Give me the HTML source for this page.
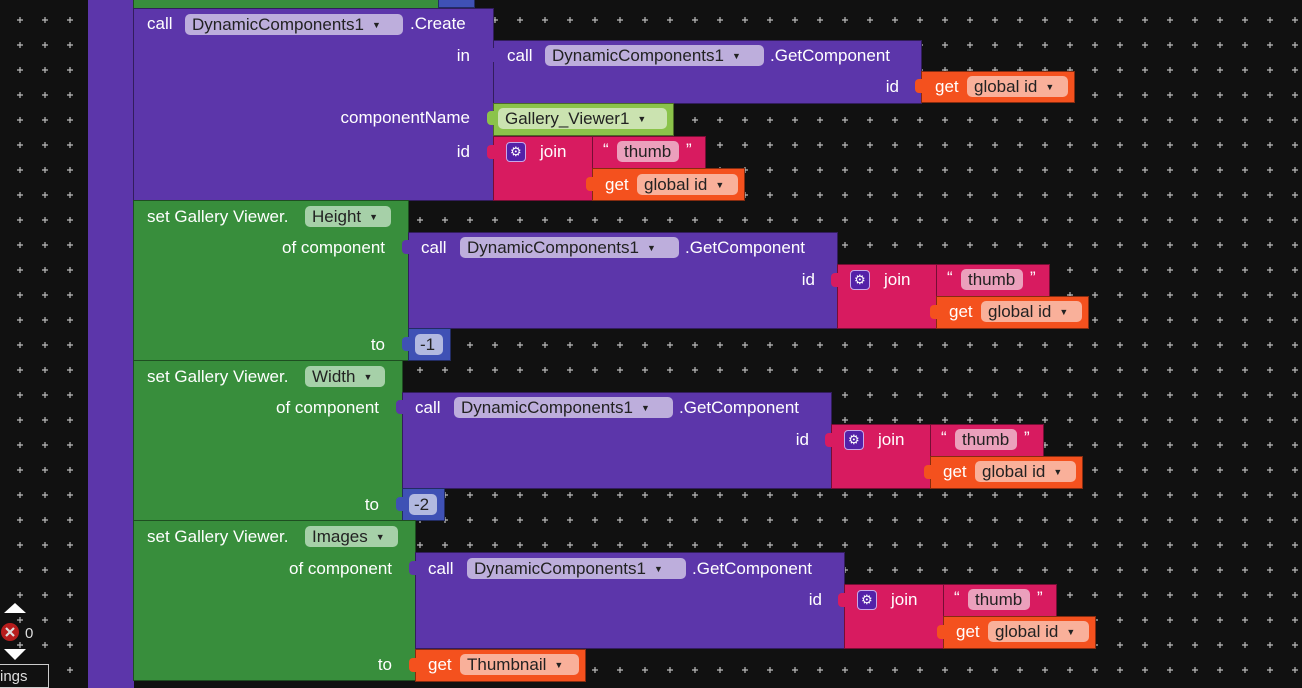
<!DOCTYPE html>
<html><head><meta charset="utf-8"><style>
body{margin:0;width:1302px;height:683px;overflow:hidden;background:#111;font-family:"Liberation Sans",Arial,sans-serif;font-size:17px;color:#fff;position:relative}
.b{position:absolute;box-sizing:border-box;border:1px solid rgba(0,0,0,.45)}
.t{position:absolute;white-space:nowrap;line-height:20px}
.r{position:absolute;white-space:nowrap;line-height:20px;width:200px;text-align:right}
.p{position:absolute;height:21px;line-height:21px;border-radius:5px;padding:0 7px;color:#222;white-space:nowrap;box-sizing:border-box}
.p i{font-style:normal;font-size:9px;margin-left:8px;vertical-align:2px}
.pu{background:#5c36aa}.gr{background:#388e3c}.mg{background:#d81b60}.or{background:#f4511e}.lg{background:#8bc34a}.bl{background:#3f51b5}
.ppu{background:#bdaedc}.pgr{background:#a6d0a8}.por{background:#f9b09a}.pmg{background:#eba0bc}.plg{background:#cbe3b0}.pbl{background:#b2b9e0}
.gear{position:absolute;width:20px;height:20px;border-radius:4px;background:#5321a8;border:1px solid #c9a8e8;box-sizing:border-box}
.tab{position:absolute;width:7px;height:14px;border-radius:4px 0 0 4px}
</style></head><body>
<svg width="1302" height="683" style="position:absolute;left:0;top:0">
<defs><pattern id="g" x="0" y="0" width="25" height="25" patternUnits="userSpaceOnUse">
<path d="M17 20h6M20 17v6" stroke="#bbb" stroke-width="1.2"/></pattern></defs>
<rect width="1302" height="683" fill="url(#g)"/>
</svg>
<div class="b pu" style="left:88px;top:-2px;width:46px;height:690px;border:none"></div>
<div class="b gr" style="left:133px;top:-5px;width:306px;height:14px"></div>
<div class="b bl" style="left:438px;top:-5px;width:37px;height:13px"></div>

<!-- Create -->
<div class="b pu" style="left:133px;top:8px;width:361px;height:193px"></div>
<div class="t" style="left:147px;top:14px">call</div>
<div class="p ppu" style="left:185px;top:14px;width:218px">DynamicComponents1<i>▼</i></div>
<div class="t" style="left:410px;top:14px">.Create</div>
<div class="r" style="left:270px;top:46px">in</div>
<div class="r" style="left:270px;top:108px">componentName</div>
<div class="r" style="left:270px;top:142px">id</div>

<div class="b pu" style="left:493px;top:40px;width:429px;height:64px"></div>
<div class="tab pu" style="left:487px;top:48px"></div>
<div class="t" style="left:507px;top:46px">call</div>
<div class="p ppu" style="left:545px;top:45px;width:219px">DynamicComponents1<i>▼</i></div>
<div class="t" style="left:770px;top:46px">.GetComponent</div>
<div class="r" style="left:699px;top:77px">id</div>
<div class="b or" style="left:921px;top:71px;width:154px;height:32px"></div>
<div class="tab or" style="left:915px;top:79px"></div>
<div class="t" style="left:935px;top:77px">get</div>
<div class="p por" style="left:967px;top:76px;width:101px">global id<i>▼</i></div>

<div class="b lg" style="left:493px;top:103px;width:181px;height:33px"></div>
<div class="tab lg" style="left:487px;top:111px"></div>
<div class="p plg" style="left:498px;top:108px;width:169px">Gallery_Viewer1<i>▼</i></div>

<div class="b mg" style="left:493px;top:136px;width:100px;height:65px"></div>
<div class="tab mg" style="left:487px;top:145px"></div>
<div class="gear" style="left:506px;top:142px"></div><div class="t" style="left:510px;top:142px;font-size:13px">⚙</div>
<div class="t" style="left:540px;top:142px">join</div>
<div class="b mg" style="left:592px;top:136px;width:114px;height:33px"></div>
<div class="t" style="left:603px;top:140px">“</div>
<div class="p pmg" style="left:617px;top:141px;width:62px">thumb</div>
<div class="t" style="left:686px;top:140px">”</div>
<div class="b or" style="left:592px;top:168px;width:153px;height:33px"></div>
<div class="tab or" style="left:586px;top:177px"></div>
<div class="t" style="left:605px;top:175px">get</div>
<div class="p por" style="left:637px;top:174px;width:101px">global id<i>▼</i></div>

<!-- Height -->
<div class="b gr" style="left:133px;top:200px;width:276px;height:161px"></div>
<div class="t" style="left:147px;top:207px">set Gallery Viewer.</div>
<div class="p pgr" style="left:305px;top:206px;width:86px">Height<i>▼</i></div>
<div class="r" style="left:185px;top:238px">of component</div>
<div class="r" style="left:185px;top:335px">to</div>
<div class="b pu" style="left:408px;top:232px;width:430px;height:97px"></div>
<div class="tab pu" style="left:402px;top:240px"></div>
<div class="t" style="left:421px;top:238px">call</div>
<div class="p ppu" style="left:460px;top:237px;width:219px">DynamicComponents1<i>▼</i></div>
<div class="t" style="left:685px;top:238px">.GetComponent</div>
<div class="r" style="left:615px;top:270px">id</div>
<div class="b mg" style="left:837px;top:264px;width:100px;height:65px"></div>
<div class="tab mg" style="left:831px;top:273px"></div>
<div class="gear" style="left:850px;top:270px"></div><div class="t" style="left:854px;top:270px;font-size:13px">⚙</div>
<div class="t" style="left:884px;top:270px">join</div>
<div class="b mg" style="left:936px;top:264px;width:114px;height:33px"></div>
<div class="t" style="left:947px;top:268px">“</div>
<div class="p pmg" style="left:961px;top:269px;width:62px">thumb</div>
<div class="t" style="left:1030px;top:268px">”</div>
<div class="b or" style="left:936px;top:296px;width:153px;height:33px"></div>
<div class="tab or" style="left:930px;top:305px"></div>
<div class="t" style="left:949px;top:302px">get</div>
<div class="p por" style="left:981px;top:301px;width:101px">global id<i>▼</i></div>
<div class="b bl" style="left:408px;top:328px;width:43px;height:33px"></div>
<div class="tab bl" style="left:402px;top:337px"></div>
<div class="p pbl" style="left:415px;top:334px;width:28px;padding:0 5px">-1</div>

<!-- Width -->
<div class="b gr" style="left:133px;top:360px;width:270px;height:161px"></div>
<div class="t" style="left:147px;top:367px">set Gallery Viewer.</div>
<div class="p pgr" style="left:305px;top:366px;width:80px">Width<i>▼</i></div>
<div class="r" style="left:179px;top:398px">of component</div>
<div class="r" style="left:179px;top:495px">to</div>
<div class="b pu" style="left:402px;top:392px;width:430px;height:97px"></div>
<div class="tab pu" style="left:396px;top:400px"></div>
<div class="t" style="left:415px;top:398px">call</div>
<div class="p ppu" style="left:454px;top:397px;width:219px">DynamicComponents1<i>▼</i></div>
<div class="t" style="left:679px;top:398px">.GetComponent</div>
<div class="r" style="left:609px;top:430px">id</div>
<div class="b mg" style="left:831px;top:424px;width:100px;height:65px"></div>
<div class="tab mg" style="left:825px;top:433px"></div>
<div class="gear" style="left:844px;top:430px"></div><div class="t" style="left:848px;top:430px;font-size:13px">⚙</div>
<div class="t" style="left:878px;top:430px">join</div>
<div class="b mg" style="left:930px;top:424px;width:114px;height:33px"></div>
<div class="t" style="left:941px;top:428px">“</div>
<div class="p pmg" style="left:955px;top:429px;width:62px">thumb</div>
<div class="t" style="left:1024px;top:428px">”</div>
<div class="b or" style="left:930px;top:456px;width:153px;height:33px"></div>
<div class="tab or" style="left:924px;top:465px"></div>
<div class="t" style="left:943px;top:462px">get</div>
<div class="p por" style="left:975px;top:461px;width:101px">global id<i>▼</i></div>
<div class="b bl" style="left:402px;top:488px;width:43px;height:33px"></div>
<div class="tab bl" style="left:396px;top:497px"></div>
<div class="p pbl" style="left:409px;top:494px;width:28px;padding:0 5px">-2</div>

<!-- Images -->
<div class="b gr" style="left:133px;top:520px;width:283px;height:161px"></div>
<div class="t" style="left:147px;top:527px">set Gallery Viewer.</div>
<div class="p pgr" style="left:305px;top:526px;width:93px">Images<i>▼</i></div>
<div class="r" style="left:192px;top:559px">of component</div>
<div class="r" style="left:192px;top:655px">to</div>
<div class="b pu" style="left:415px;top:552px;width:430px;height:97px"></div>
<div class="tab pu" style="left:409px;top:561px"></div>
<div class="t" style="left:428px;top:559px">call</div>
<div class="p ppu" style="left:467px;top:558px;width:219px">DynamicComponents1<i>▼</i></div>
<div class="t" style="left:692px;top:559px">.GetComponent</div>
<div class="r" style="left:622px;top:590px">id</div>
<div class="b mg" style="left:844px;top:584px;width:100px;height:65px"></div>
<div class="tab mg" style="left:838px;top:593px"></div>
<div class="gear" style="left:857px;top:590px"></div><div class="t" style="left:861px;top:590px;font-size:13px">⚙</div>
<div class="t" style="left:891px;top:590px">join</div>
<div class="b mg" style="left:943px;top:584px;width:114px;height:33px"></div>
<div class="t" style="left:954px;top:588px">“</div>
<div class="p pmg" style="left:968px;top:589px;width:62px">thumb</div>
<div class="t" style="left:1037px;top:588px">”</div>
<div class="b or" style="left:943px;top:616px;width:153px;height:33px"></div>
<div class="tab or" style="left:937px;top:625px"></div>
<div class="t" style="left:956px;top:622px">get</div>
<div class="p por" style="left:988px;top:621px;width:101px">global id<i>▼</i></div>
<div class="b or" style="left:415px;top:649px;width:171px;height:33px"></div>
<div class="tab or" style="left:409px;top:658px"></div>
<div class="t" style="left:428px;top:655px">get</div>
<div class="p por" style="left:460px;top:654px;width:119px">Thumbnail<i>▼</i></div>

<svg width="60" height="70" style="position:absolute;left:0;top:600px">
<path d="M4 13L15 3L26 13Z" fill="#fff"/>
<circle cx="10" cy="32" r="9" fill="#b71c1c"/>
<path d="M6 28l8 8M14 28l-8 8" stroke="#ddd" stroke-width="2.2"/>
<path d="M4 49L15 60L26 49Z" fill="#fff"/>
</svg>
<div class="t" style="left:25px;top:624px;font-size:15px;color:#ddd">0</div>
<div style="position:absolute;left:-2px;top:664px;width:51px;height:24px;border:1px solid #ccc;box-sizing:border-box;background:#111"></div>
<div class="t" style="left:0;top:667px;font-size:15px;color:#ddd">ings</div>
</body></html>
